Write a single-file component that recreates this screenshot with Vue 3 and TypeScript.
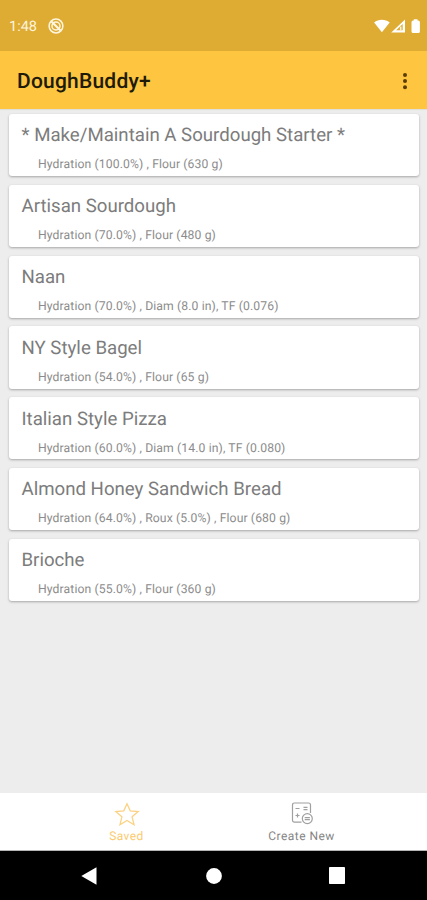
<script setup lang="ts">
interface Recipe {
  name: string
  details: string
}

const recipes: Recipe[] = [
  { name: '* Make/Maintain A Sourdough Starter *', details: 'Hydration (100.0%) , Flour (630 g)' },
  { name: 'Artisan Sourdough', details: 'Hydration (70.0%) , Flour (480 g)' },
  { name: 'Naan', details: 'Hydration (70.0%) , Diam (8.0 in), TF (0.076)' },
  { name: 'NY Style Bagel', details: 'Hydration (54.0%) , Flour (65 g)' },
  { name: 'Italian Style Pizza', details: 'Hydration (60.0%) , Diam (14.0 in), TF (0.080)' },
  { name: 'Almond Honey Sandwich Bread', details: 'Hydration (64.0%) , Roux (5.0%) , Flour (680 g)' },
  { name: 'Brioche', details: 'Hydration (55.0%) , Flour (360 g)' },
]
</script>

<template>
  <div class="screen">
    <div class="status">
      <span class="time">1:48</span>
      <svg class="dnd" width="16" height="16" viewBox="0 0 16 16" fill="none" stroke="#fff6df">
        <circle cx="8" cy="8" r="6.9" stroke-width="1.5" />
        <circle cx="8" cy="8" r="4" stroke-width="1.5" />
        <path d="M3.5 3.5L12.5 12.5" stroke-width="2.2" />
      </svg>
      <svg class="signals" width="48" height="16" viewBox="0 0 48 16">
        <path d="M0.1 3.6C4.3 -0.1 11.5 -0.1 15.7 3.6L7.9 13.2Z" fill="#fff" />
        <path d="M17.2 13.4L31 0.6V13.4Z" fill="#fff" />
        <path d="M22.1 11.3L28.7 5V11.3Z" fill="#deab33" />
        <path d="M26.7 7.6V11.3" stroke="#fff4d8" stroke-width="1.6" />
        <path d="M37.5 3.2Q37.5 1.6 39 1.6H39.8V0.2H43.5V1.6H44.3Q45.9 1.6 45.9 3.2V12.4Q45.9 14 44.3 14H39Q37.5 14 37.5 12.4Z" fill="#fff" />
      </svg>
    </div>
    <header class="toolbar">
      <h1>DoughBuddy+</h1>
      <svg class="more" width="6" height="18" viewBox="0 0 6 18" fill="#5b3d0c">
        <circle cx="3" cy="2" r="2" />
        <circle cx="3" cy="8.1" r="2" />
        <circle cx="3" cy="14.3" r="2" />
      </svg>
    </header>
    <main class="list">
      <article v-for="recipe in recipes" :key="recipe.name" class="card">
        <h2>{{ recipe.name }}</h2>
        <p>{{ recipe.details }}</p>
      </article>
    </main>
    <nav class="tabs">
      <div class="tab active">
        <svg width="26" height="24" viewBox="0 0 26 24" fill="none" stroke="#fbd283" stroke-width="1.3">
          <path d="M13 1.8L16.2 8.8L24.2 9.5L18.1 14.8L20 22.7L13 18.5L6 22.7L7.9 14.8L1.8 9.5L9.8 8.8Z" />
        </svg>
        <span>Saved</span>
      </div>
      <div class="tab">
        <svg width="24" height="24" viewBox="0 0 24 24" fill="none" stroke="#a0a0a0" stroke-width="1.2">
          <path d="M11.5 20.2H4.5Q2.5 20.2 2.5 18.2V3Q2.5 1 4.5 1H18.5Q20.5 1 20.5 3V11" />
          <path d="M5.5 6.5H9.5M13.5 5.3H17.5M13.5 7.7H17.5M5.5 13.5H9.5M7.5 11.5V15.5" />
          <circle cx="17.3" cy="16.6" r="5" />
          <path d="M14.7 15.6H19.9M14.7 17.6H19.9" />
        </svg>
        <span>Create New</span>
      </div>
    </nav>
    <div class="system">
      <svg width="16" height="18" viewBox="0 0 16 18" fill="#fff"><path d="M0.3 9L15.5 0.2V17.8Z" /></svg>
      <svg class="home" width="16" height="16" viewBox="0 0 16 16" fill="#fff"><circle cx="8" cy="8" r="7.9" /></svg>
      <svg width="16" height="17" viewBox="0 0 16 17" fill="#fff"><rect width="16" height="17" rx="0.8" /></svg>
    </div>
  </div>
</template>

<style>
body {
  margin: 0;
}
</style>

<style scoped>
.screen {
  width: 427px;
  height: 900px;
  display: flex;
  flex-direction: column;
  overflow: hidden;
  background: #ededed;
  font-family: Roboto, "Liberation Sans", sans-serif;
  text-rendering: geometricPrecision;
}
.status {
  height: 51px;
  box-sizing: border-box;
  padding: 0 5px 0 9px;
  display: flex;
  align-items: center;
  background: #deab33;
  color: #fff6df;
}
.time {
  width: 39px;
  font-size: 14.5px;
  line-height: 18px;
  padding-top: 3px;
}
.dnd {
  margin-top: 1px;
}
.signals {
  margin-left: auto;
  margin-top: 2px;
}
.toolbar {
  height: 58px;
  box-sizing: border-box;
  padding: 3px 19px 0 17px;
  display: flex;
  align-items: center;
  justify-content: space-between;
  background: #fdc540;
  box-shadow: 0 1px 1px #dfe0dd;
}
h1 {
  margin: 0;
  font-size: 21px;
  font-weight: 500;
  line-height: 26px;
  letter-spacing: 0.22px;
  color: #201a08;
}
.list {
  flex: 1;
  padding: 5px 8px 0 9px;
  display: flex;
  flex-direction: column;
  gap: 8.5px;
}
.card {
  height: 62.3px;
  box-sizing: border-box;
  padding: 9.4px 12.5px 0;
  flex: none;
  border-radius: 3px;
  background: #fff;
  box-shadow: 0 1px 2.5px rgba(0, 0, 0, 0.3);
}
h2 {
  margin: 0;
  font-size: 18.65px;
  font-weight: 400;
  line-height: 24px;
  color: #7c7c7c;
  white-space: nowrap;
}
p {
  margin: 10px 0 0 16.5px;
  font-size: 12.2px;
  line-height: 14px;
  letter-spacing: 0.11px;
  color: #8c8c8c;
  white-space: nowrap;
}
.tabs {
  height: 58px;
  box-sizing: border-box;
  padding: 0 38px 0 39px;
  display: flex;
  background: #fff;
  border-bottom: 1px solid #b5b5b5;
}
.tab {
  flex: 1;
  padding-top: 9px;
  display: flex;
  flex-direction: column;
  align-items: center;
  font-size: 12px;
  line-height: 14px;
  letter-spacing: 0.45px;
  color: #858585;
}
.tab span {
  margin-top: 3px;
}
.active {
  color: #fbcb70;
}
.system {
  height: 49px;
  box-sizing: border-box;
  padding: 0 82px 0 81px;
  display: flex;
  align-items: center;
  justify-content: space-between;
  background: #000;
}
.home {
  position: relative;
  left: 1px;
}
</style>
